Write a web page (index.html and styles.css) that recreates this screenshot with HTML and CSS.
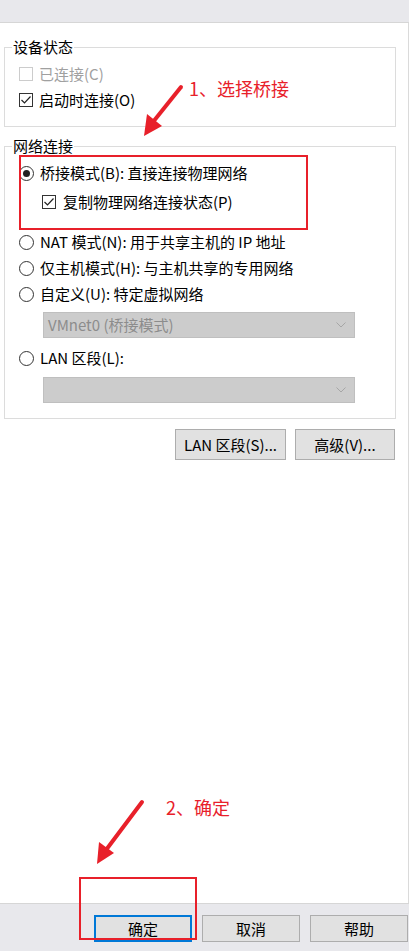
FILE: index.html
```html
<!DOCTYPE html>
<html lang="zh-CN">
<head>
<meta charset="utf-8">
<title>网络连接</title>
<link rel="stylesheet" href="styles.css">
</head>
<body>
<div class="page">
  <div class="topbar"></div>
  <div class="main">
    <div class="group g1">
      <div class="group-title">设备状态</div>
      <div class="opt">
        <span class="cb disabled"></span>
        <span class="label disabled-text">已连接(C)</span>
      </div>
      <div class="opt">
        <span class="cb"><svg viewBox="0 0 14 14" width="14" height="14"><polyline points="2.5,7 5.5,10 11.5,3.5" fill="none" stroke="#222" stroke-width="1.2"/></svg></span>
        <span class="label">启动时连接(O)</span>
      </div>
    </div>

    <div class="group g2">
      <div class="group-title">网络连接</div>
      <div class="opt r1">
        <span class="radio checked"></span>
        <span class="label">桥接模式(B): 直接连接物理网络</span>
      </div>
      <div class="opt nested r2">
        <span class="cb"><svg viewBox="0 0 14 14" width="14" height="14"><polyline points="2.5,7 5.5,10 11.5,3.5" fill="none" stroke="#222" stroke-width="1.2"/></svg></span>
        <span class="label">复制物理网络连接状态(P)</span>
      </div>
      <div class="opt r3">
        <span class="radio"></span>
        <span class="label">NAT 模式(N): 用于共享主机的 IP 地址</span>
      </div>
      <div class="opt">
        <span class="radio"></span>
        <span class="label">仅主机模式(H): 与主机共享的专用网络</span>
      </div>
      <div class="opt">
        <span class="radio"></span>
        <span class="label">自定义(U): 特定虚拟网络</span>
      </div>
      <div class="select s1">
        <span class="select-text">VMnet0 (桥接模式)</span>
        <svg class="chev" viewBox="0 0 10 6" width="10" height="6"><polyline points="0.5,0.5 5,5 9.5,0.5" fill="none" stroke="#a6a6a6" stroke-width="1"/></svg>
      </div>
      <div class="opt r-lan">
        <span class="radio"></span>
        <span class="label">LAN 区段(L):</span>
      </div>
      <div class="select s2">
        <span class="select-text"></span>
        <svg class="chev" viewBox="0 0 10 6" width="10" height="6"><polyline points="0.5,0.5 5,5 9.5,0.5" fill="none" stroke="#a6a6a6" stroke-width="1"/></svg>
      </div>
    </div>

    <div class="btn-row">
      <button class="btn btn-lan">LAN 区段(S)...</button>
      <button class="btn btn-adv">高级(V)...</button>
    </div>
  </div>
  <div class="footer">
    <button class="btn fbtn default">确定</button>
    <button class="btn fbtn">取消</button>
    <button class="btn fbtn">帮助</button>
  </div>

  <svg class="annot" viewBox="0 0 409 951" width="409" height="951">
    <rect x="20" y="156" width="287" height="73" fill="none" stroke="#e8202a" stroke-width="2"/>
    <rect x="80" y="878" width="116" height="61" fill="none" stroke="#e8202a" stroke-width="2"/>
    <line x1="181" y1="87" x2="153" y2="122" stroke="#e8202a" stroke-width="4" stroke-linecap="round"/>
    <polygon points="144,136 147,114 162,126" fill="#e8202a"/>
    <line x1="142" y1="802" x2="106" y2="850" stroke="#e8202a" stroke-width="4" stroke-linecap="round"/>
    <polygon points="97,864 99,842 114,853" fill="#e8202a"/>
    <text x="189" y="96" class="annot-text">1、选择桥接</text>
    <text x="166" y="815" class="annot-text">2、确定</text>
  </svg>
</div>
</body>
</html>
```

FILE: styles.css
```css
* { box-sizing: border-box; }
html, body { margin: 0; padding: 0; background: #fff; }
body {
  font-family: "Noto Sans CJK SC", "Noto Sans", sans-serif;
  font-size: 15px;
  color: #000;
}
.page {
  position: relative;
  width: 409px;
  height: 951px;
  display: flex;
  flex-direction: column;
  overflow: hidden;
}
.topbar {
  height: 23px;
  background: #e8e8ec;
  border-bottom: 1px solid #d6d6d6;
  flex: none;
}
.main {
  flex: 1;
  background: #fff;
  border-right: 1px solid #dadada;
  padding: 0 12px 0 4px;
}
.group {
  border: 1px solid #dcdcdc;
}
.g1 { margin-top: 24px; padding-bottom: 13px; }
.g2 { margin-top: 19px; padding-bottom: 15px; }
.group-title {
  margin-top: -10px;
  margin-left: 7px;
  padding: 0 1px;
  width: fit-content;
  background: #fff;
  line-height: 18px;
  height: 18px;
}
.opt {
  display: flex;
  align-items: center;
  height: 26px;
  padding-left: 14px;
  gap: 6px;
  line-height: 18px;
}
.g1 .opt:first-of-type { margin-top: 5px; }
.g1 .group-title + .opt { margin-top: 5px; }
.r1 { margin-top: 5px; }
.r2 { margin-top: 3px; }
.r3 { margin-top: 14px; }
.r-lan { margin-top: 7px; }
.nested { padding-left: 37px; gap: 7px; }
.cb {
  width: 14px;
  height: 14px;
  border: 1px solid #333;
  background: #fff;
  display: flex;
  align-items: center;
  justify-content: center;
  flex: none;
}
.cb svg { display: block; margin: -1px; }
.cb.disabled { border-color: #cccccc; }
.disabled-text { color: #a0a0a0; }
.radio {
  width: 15px;
  height: 15px;
  border: 1px solid #333;
  border-radius: 50%;
  background: #fff;
  flex: none;
  display: flex;
  align-items: center;
  justify-content: center;
  margin-left: 0;
}
.radio.checked::after {
  content: "";
  width: 7px;
  height: 7px;
  border-radius: 50%;
  background: #222;
}
.label { white-space: nowrap; }
.select {
  margin-left: 38px;
  width: 312px;
  height: 26px;
  background: #cccccc;
  border: 1px solid #bfbfbf;
  display: flex;
  align-items: center;
  justify-content: space-between;
  padding: 0 8px 0 4px;
  color: #8c8c8c;
  line-height: 18px;
}
.s1 { margin-top: 5px; }
.s2 { margin-top: 6px; }
.chev { display: block; }
.btn-row {
  display: flex;
  justify-content: flex-end;
  gap: 9px;
  margin-top: 10px;
  padding-right: 1px;
}
.btn {
  font-family: "Noto Sans CJK SC", "Noto Sans", sans-serif;
  font-size: 15px;
  color: #000;
  background: #e1e1e1;
  border: 1px solid #adadad;
  padding: 0;
  line-height: 18px;
}
.btn-lan { width: 111px; height: 31px; }
.btn-adv { width: 100px; height: 31px; }
.footer {
  flex: none;
  height: 48px;
  background: #e8e8ec;
  border-top: 1px solid #d6d6d6;
  display: flex;
  align-items: flex-start;
  gap: 10px;
  padding: 11px 0 0 94px;
}
.fbtn { width: 98px; height: 27px; flex: none; }
.fbtn.default { border: 2px solid #0078d7; }
.annot {
  position: absolute;
  left: 0;
  top: 0;
  pointer-events: none;
}
.annot-text {
  font-family: "Noto Sans CJK SC", sans-serif;
  font-size: 18px;
  fill: #e8202a;
}
```
